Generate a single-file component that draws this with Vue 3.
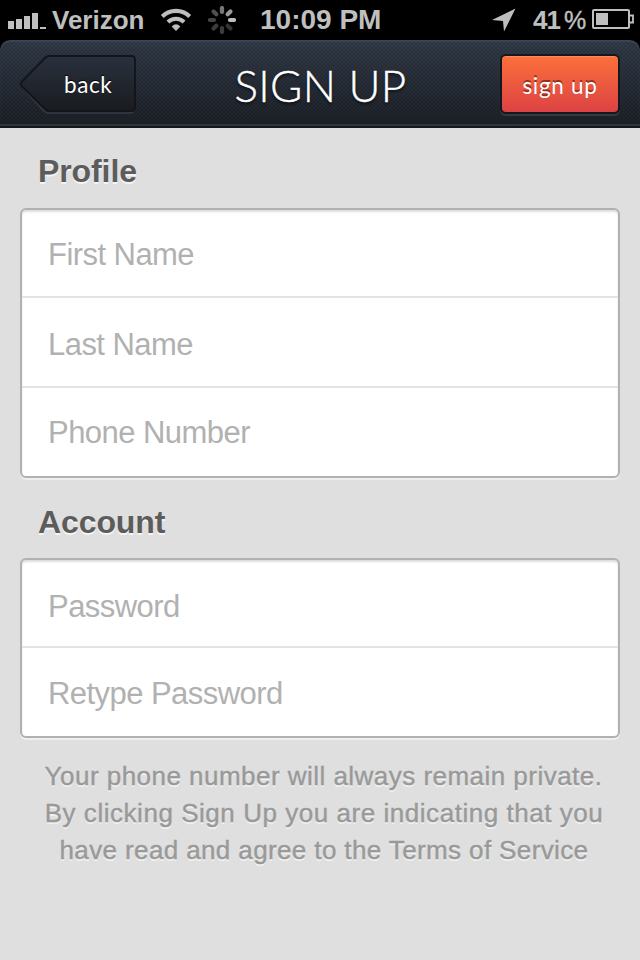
<script setup>
const bars = [8, 10, 13, 16, 2]
const spokes = ['#777', '#999', '#bdbdbd', '#333', '#3c3c3c', '#3c3c3c', '#444', '#505050']
const groups = [
  { title: 'Profile', key: 'profile', fields: ['First Name', 'Last Name', 'Phone Number'] },
  { title: 'Account', key: 'account', fields: ['Password', 'Retype Password'] },
]
const notes = [
  'Your phone number will always remain private.',
  'By clicking Sign Up you are indicating that you',
  'have read and agree to the Terms of Service',
]
</script>

<template>
  <div class="screen">
    <div class="status">
      <div class="signal">
        <i v-for="(h, i) in bars" :key="i" :style="{ height: h + 'px' }"></i>
      </div>
      <span class="carrier">Verizon</span>
      <svg class="wifi" width="32" height="24" viewBox="0 0 32 24">
        <path d="M2.300 8.400A19.500 19.500 0 0 1 29.700 8.400" fill="none" stroke="#bfbfbf" stroke-width="4.200" />
        <path d="M7.900 14A11.600 11.600 0 0 1 24.100 14" fill="none" stroke="#bfbfbf" stroke-width="4" />
        <path d="M11.700 18.600Q16 14 20.300 18.600L16 23Z" fill="#bfbfbf" />
      </svg>
      <svg class="spinner" width="28" height="28" viewBox="-14 -14 28 28">
        <line
          v-for="(c, i) in spokes" :key="i" x1="0" y1="-8" x2="0" y2="-12"
          :stroke="c" stroke-width="4.200" stroke-linecap="round" :transform="`rotate(${i * 45})`"
        />
      </svg>
      <span class="clock">10:09 PM</span>
      <svg class="locate" width="24" height="24" viewBox="0 0 24 24">
        <path d="M23.500 .5L0 12L11 13L12 23.500Z" fill="#bfbfbf" />
      </svg>
      <span class="percent">41</span>
      <span class="sign">%</span>
      <svg class="battery" width="42" height="20" viewBox="0 0 42 20">
        <rect x="1" y="1" width="36" height="18" rx="1" fill="none" stroke="#bfbfbf" stroke-width="2" />
        <path d="M38 6.500H41V13.500H38" fill="none" stroke="#bfbfbf" stroke-width="1.800" />
        <rect x="4" y="4" width="12" height="12" fill="#bfbfbf" />
      </svg>
    </div>

    <div class="nav-back">
      <header class="nav">
        <div class="back">
          <svg class="shape" width="118" height="62" viewBox="0 0 118 62">
            <defs>
              <linearGradient id="backFill" x1="0" y1="0" x2="0" y2="1">
                <stop offset="0" stop-color="#2a313d" />
                <stop offset="1" stop-color="#191b1f" />
              </linearGradient>
            </defs>
            <path d="M30 5H112Q116 5 116 9V56Q116 60 112 60H30Q28 60 26 58L3.500 34Q2 32 3.500 30L26 7Q28 5 30 5Z" fill="none" stroke="#343a44" stroke-width="1.500" />
            <path d="M31 3H113Q117 3 117 7V54Q117 58 113 58H31Q29 58 27 56L3.500 33Q2 31 3.500 29L27 5Q29 3 31 3Z" fill="url(#backFill)" stroke="#12151b" stroke-width="2" />
          </svg>
          <span class="back-label">back</span>
        </div>
        <h1>SIGN UP</h1>
        <div class="submit"><span>sign up</span></div>
      </header>
    </div>

    <main>
      <section v-for="g in groups" :key="g.key" :class="g.key">
        <h2>{{ g.title }}</h2>
        <div class="card">
          <div v-for="f in g.fields" :key="f" class="row"><span>{{ f }}</span></div>
        </div>
      </section>
      <div class="notes">
        <p v-for="(n, i) in notes" :key="n" :class="'n' + i">{{ n }}</p>
      </div>
    </main>
  </div>
</template>

<style>
body { margin: 0; background: #dfdfdf; }
</style>

<style scoped>
* { box-sizing: border-box; }
.screen {
  width: 640px; height: 960px; overflow: hidden; background: #dfdfdf;
  font-family: "Liberation Sans", Arial, sans-serif; white-space: nowrap;
}
.status {
  height: 40px; background: #000; color: #bfbfbf; display: flex; align-items: center;
  font-weight: bold; padding: 0 6px 0 8px;
}
.signal { display: flex; align-items: flex-end; gap: 2px; height: 16px; margin-top: 2px; width: 38px; }
.signal i { width: 6px; background: #bfbfbf; }
.carrier { font-size: 26px; width: 93px; margin-left: 6px; }
.wifi { margin-left: 15px; }
.spinner { margin-left: 16px; }
.clock { font-size: 28px; margin-left: 24px; width: 122px; }
.locate { margin-left: 110px; }
.percent { font-size: 26px; margin-left: 17px; width: 28px; letter-spacing: -1px; }
.sign { font-size: 25px; font-weight: normal; margin-left: 3px; width: 23px; -webkit-text-stroke: .4px #bfbfbf; }
.battery { margin-left: 5px; flex: none; margin-top: -2px; }
.nav-back { background: #000; }
.nav {
  height: 88px; border-radius: 10px 10px 0 0; padding: 13px 20px 0 18px;
  display: grid; grid-template-columns: 118px 1fr 120px;
  background:
    radial-gradient(circle, rgba(0, 0, 0, .12) .8px, transparent 1.1px) 0 0 / 4px 4px,
    radial-gradient(circle, rgba(0, 0, 0, .12) .8px, transparent 1.1px) 2px 2px / 4px 4px,
    linear-gradient(#323b49, #1d2128 84px);
  box-shadow: inset 0 -2px #15181d, inset 0 -4px #30343b, inset 0 2px 1px #3b4553;
  color: #fff; align-items: start;
}
.back { display: grid; }
.back > * { grid-area: 1 / 1; }
.back-label {
  font: 22.5px/62px Lato, sans-serif; padding-left: 46px; padding-top: 1px; letter-spacing: .6px;
  text-shadow: 0 -1px 1px #000; z-index: 1;
}
h1 {
  margin: 0; font: 300 44px/64px Lato, sans-serif; text-align: center; letter-spacing: .3px;
  padding-left: 5px; text-shadow: 0 2px 3px rgba(0, 0, 0, .7); -webkit-text-stroke: .4px #fff;
}
.submit {
  height: 60px; margin: 1px 0 0; border: 2px solid #151820; border-radius: 6px;
  background: linear-gradient(#fb703b, #dc4243); text-align: center;
  box-shadow: 0 2px #343942, inset 0 1px #ff8a58;
  font: 22.5px/60px Lato, sans-serif; letter-spacing: .7px; text-shadow: 0 -2px rgba(100, 30, 20, .7);
}
main { padding: 0 20px; }
h2 {
  margin: 0; height: 80px; padding: 25px 0 0 18px; font-size: 32px; line-height: 37px;
  color: #5c5c5c; text-shadow: 0 2px #f4f4f4; letter-spacing: -.1px;
}
.account h2 { padding-top: 26px; }
.card {
  border: 2px solid #b1b1b1; border-radius: 6px; background: #fff;
  box-shadow: 0 2px #efefef, inset 0 2px 2px #dedede;
}
.row { height: 90px; line-height: 93px; padding-left: 26px; font-size: 31px; letter-spacing: -.55px; color: #b1b1b1; border-bottom: 2px solid #e3e3e3; }
.row:first-child { height: 88px; line-height: 90px; }
.row:last-child { border-bottom: 0; height: 88px; line-height: 89px; }
.account .row:first-child { line-height: 93px; }
.account .row:last-child { line-height: 91px; }
.notes { padding-top: 20px; text-align: center; color: #999; font-size: 26px; line-height: 37px; text-shadow: 0 2px #f0f0f0; -webkit-text-stroke: .4px #999; }
p { margin: 0; }
.n0 { letter-spacing: .47px; padding-left: 7px; }
.n1 { letter-spacing: .54px; padding-left: 8px; }
.n2 { letter-spacing: .38px; padding-left: 8px; }
</style>
